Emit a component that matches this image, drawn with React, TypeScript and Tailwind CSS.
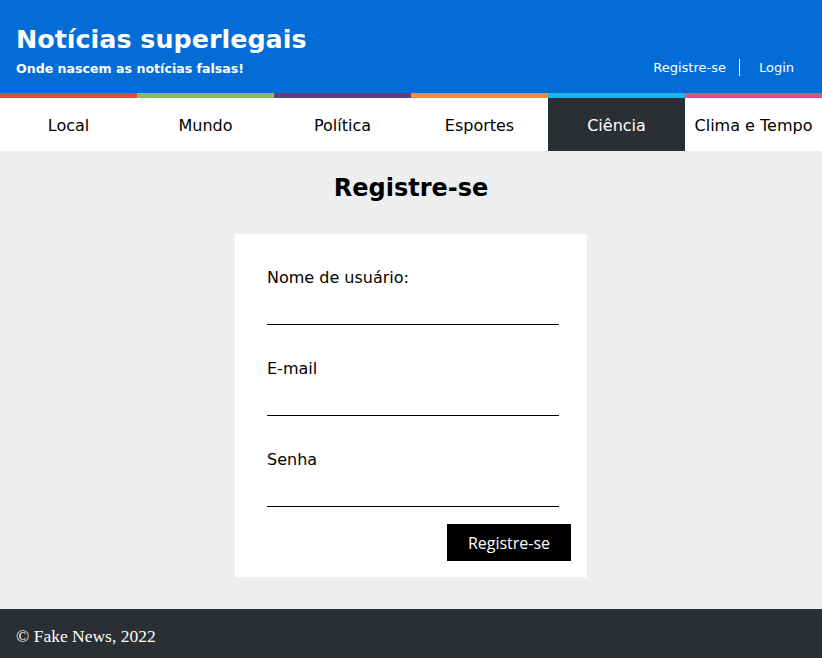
const CATEGORIES = [
  { label: 'Local', stripe: 'bg-[#e04a3f]' },
  { label: 'Mundo', stripe: 'bg-[#8bbb56]' },
  { label: 'Política', stripe: 'bg-[#5a4387]' },
  { label: 'Esportes', stripe: 'bg-[#fb8a33]' },
  { label: 'Ciência', stripe: 'bg-[#1cb4e9]' },
  { label: 'Clima e Tempo', stripe: 'bg-[#e24d8f]' },
];

const ACTIVE = 'Ciência';

const FIELDS = ['Nome de usuário:', 'E-mail', 'Senha'];

export default function App() {
  return (
    <div className="min-h-[658px] flex flex-col bg-[#edeef0] font-['DejaVu_Sans',sans-serif] text-black">
      <header className="bg-[#036cd6] text-white h-[93px] flex items-end justify-between px-4 pb-[17px]">
        <div>
          <h1 className="text-[25.4px] font-bold leading-none mb-[11px]">Notícias superlegais</h1>
          <p className="text-[12.6px] font-bold leading-none">Onde nascem as notícias falsas!</p>
        </div>
        <div className="flex items-center text-[13px] leading-none pr-[12px]">
          <a className="pr-[13px] border-r border-white py-[2px]">Registre-se</a>
          <a className="pl-[19px] py-[2px]">Login</a>
        </div>
      </header>

      <nav className="grid grid-cols-6 bg-white">
        {CATEGORIES.map((c) => (
          <div key={c.label} className="flex flex-col">
            <div className={`h-[5px] ${c.stripe}`} />
            <a
              className={`h-[53px] pt-[2px] flex items-center justify-center text-[16px] ${
                c.label === ACTIVE ? 'bg-[#2b2f33] text-white' : 'text-black'
              }`}
            >
              {c.label}
            </a>
          </div>
        ))}
      </nav>

      <main className="flex-1 flex flex-col items-center pt-[22px] pb-[32px]">
        <h2 className="text-[24px] font-bold leading-[30px] mb-[31px]">Registre-se</h2>
        <form className="bg-white w-[352px] pt-[34px] pl-[32px] pr-[16px] pb-[16px] flex flex-col">
          {FIELDS.map((f, i) => (
            <label
              key={f}
              className={`flex flex-col w-[292px] text-[16px] leading-[20px] ${i === FIELDS.length - 1 ? 'mb-[17px]' : 'mb-[34px]'}`}
            >
              <span>{f}</span>
              <input className="mt-[8px] h-[29px] border-b border-black outline-none" />
            </label>
          ))}
          <div className="flex justify-end">
            <button
              type="button"
              className="bg-black text-white font-['Open_Sans',sans-serif] text-[16px] w-[124px] h-[37px]"
            >
              Registre-se
            </button>
          </div>
        </form>
      </main>

      <footer className="bg-[#2b2f33] text-white h-[49px] flex items-center px-4 pt-[6px] font-['Liberation_Serif',serif] text-[17.5px]">
        © Fake News, 2022
      </footer>
    </div>
  );
}
